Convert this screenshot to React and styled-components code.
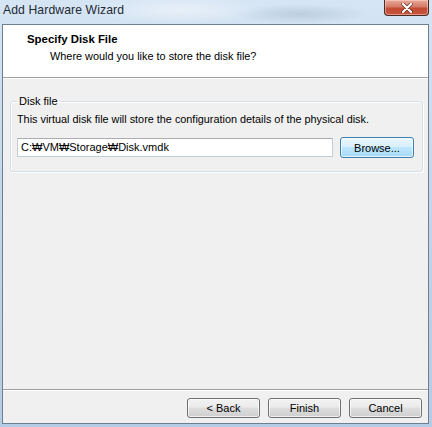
import React from 'react';
import styled, { createGlobalStyle } from 'styled-components';

const Global = createGlobalStyle`
  html, body {
    margin: 0;
    padding: 0;
    background: #b9d1ea;
  }
  body {
    font-family: 'Liberation Sans', Arial, sans-serif;
  }
`;

const Frame = styled.div`
  width: 432px;
  height: 427px;
  display: flex;
  flex-direction: column;
  background:
    radial-gradient(ellipse 90px 14px at 180px 10px, rgba(255,255,255,0.45), transparent),
    radial-gradient(ellipse 70px 10px at 300px 14px, rgba(120,140,160,0.25), transparent),
    linear-gradient(180deg, #d6e5f4 0%, #c4d8ed 40%, #b4cce6 100%);
  overflow: hidden;
`;

const TitleBar = styled.div`
  height: 24px;
  flex: none;
  display: flex;
  align-items: flex-start;
  justify-content: space-between;
`;

const Title = styled.div`
  padding: 3px 0 0 3px;
  font-family: 'Liberation Sans', Arial, sans-serif;
  font-size: 12.2px;
  color: #1e2a36;
  letter-spacing: 0.1px;
`;

const CloseButton = styled.div`
  width: 43px;
  height: 15px;
  margin-right: 3px;
  border: 1px solid #4a2a24;
  border-top: none;
  border-radius: 0 0 4px 4px;
  background: linear-gradient(180deg, #e9a999 0%, #d47b68 45%, #c24b33 55%, #c9563c 100%);
  box-shadow: inset 0 0 0 1px rgba(255, 220, 210, 0.5);
  display: flex;
  align-items: center;
  justify-content: center;
`;

const Client = styled.div`
  margin-left: 2px;
  width: 425px;
  height: 398px;
  border: 1px solid #6f7f8f;
  background: #f0f0f0;
  display: flex;
  flex-direction: column;
`;

const Header = styled.div`
  height: 53px;
  flex: none;
  background: #ffffff;
  border-bottom: 1px solid #a0a0a0;
  box-sizing: border-box;
  padding: 7px 0 0 24px;
`;

const HeaderTitle = styled.div`
  font-weight: bold;
  font-size: 11.4px;
  color: #000;
  line-height: 14px;
`;

const HeaderSub = styled.div`
  font-size: 10.9px;
  color: #000;
  line-height: 14px;
  margin: 3px 0 0 23px;
`;

const Body = styled.div`
  flex: 1;
  padding: 16px 4px 0 7px;
  border-top: 1px solid #ffffff;
`;

const Group = styled.fieldset`
  margin: 0;
  padding: 2px 6px 13px 6px;
  border: 1px solid #d5dfe5;
  border-radius: 3px;
  box-shadow: inset 1px 1px 0 #fff, 1px 1px 0 #fff;
  width: 413px;
  box-sizing: border-box;
`;

const Legend = styled.legend`
  padding: 0 2px;
  margin-left: 0;
  font-size: 11px;
  color: #000;
`;

const Description = styled.div`
  font-size: 10.85px;
  color: #000;
  line-height: 14px;
  margin-top: 3px;
`;

const FileRow = styled.div`
  display: flex;
  align-items: center;
  gap: 7px;
  margin-top: 11px;
`;

const PathInput = styled.div`
  width: 316px;
  height: 19px;
  box-sizing: border-box;
  border: 1px solid #c5cdd6;
  border-top-color: #abadb3;
  background: #fff;
  font-size: 11px;
  color: #000;
  padding: 2px 3px 0 3px;
`;

const Button = styled.div`
  width: ${p => p.w || 73}px;
  height: ${p => p.h || 20}px;
  box-sizing: border-box;
  border: 1px solid ${p => (p.primary ? '#3c7fb1' : '#707070')};
  border-radius: 3px;
  background: ${p =>
    p.primary
      ? 'linear-gradient(180deg, #eaf6fd 0%, #d9f0fc 45%, #bee6fd 50%, #a7d9f5 100%)'
      : 'linear-gradient(180deg, #f2f2f2 0%, #ebebeb 45%, #dddddd 50%, #cfcfcf 100%)'};
  box-shadow: inset 0 0 0 1px rgba(255, 255, 255, 0.7);
  display: flex;
  align-items: center;
  justify-content: center;
  font-size: 11px;
  color: #000;
`;

const Footer = styled.div`
  height: 34px;
  flex: none;
  border-top: 1px solid #a0a0a0;
  box-shadow: inset 0 1px 0 #fff;
  display: flex;
  justify-content: flex-end;
  align-items: flex-start;
  gap: 8px;
  padding: 8px 6px 0 0;
  box-sizing: border-box;
`;

export default function App() {
  return (
    <>
      <Global />
      <Frame>
        <TitleBar>
          <Title>Add Hardware Wizard</Title>
          <CloseButton>
            <svg width="12" height="10" viewBox="0 0 12 10">
              <path d="M2 1 L10 9 M10 1 L2 9" stroke="#5a2a20" strokeWidth="3.4" strokeLinecap="round" />
              <path d="M2 1 L10 9 M10 1 L2 9" stroke="#ffffff" strokeWidth="2.2" strokeLinecap="round" />
            </svg>
          </CloseButton>
        </TitleBar>
        <Client>
          <Header>
            <HeaderTitle>Specify Disk File</HeaderTitle>
            <HeaderSub>Where would you like to store the disk file?</HeaderSub>
          </Header>
          <Body>
            <Group>
              <Legend>Disk file</Legend>
              <Description>
                This virtual disk file will store the configuration details of the physical disk.
              </Description>
              <FileRow>
                <PathInput>C:₩VM₩Storage₩Disk.vmdk</PathInput>
                <Button primary w={74} h={21}>Browse...</Button>
              </FileRow>
            </Group>
          </Body>
          <Footer>
            <Button>&lt; Back</Button>
            <Button>Finish</Button>
            <Button>Cancel</Button>
          </Footer>
        </Client>
      </Frame>
    </>
  );
}
